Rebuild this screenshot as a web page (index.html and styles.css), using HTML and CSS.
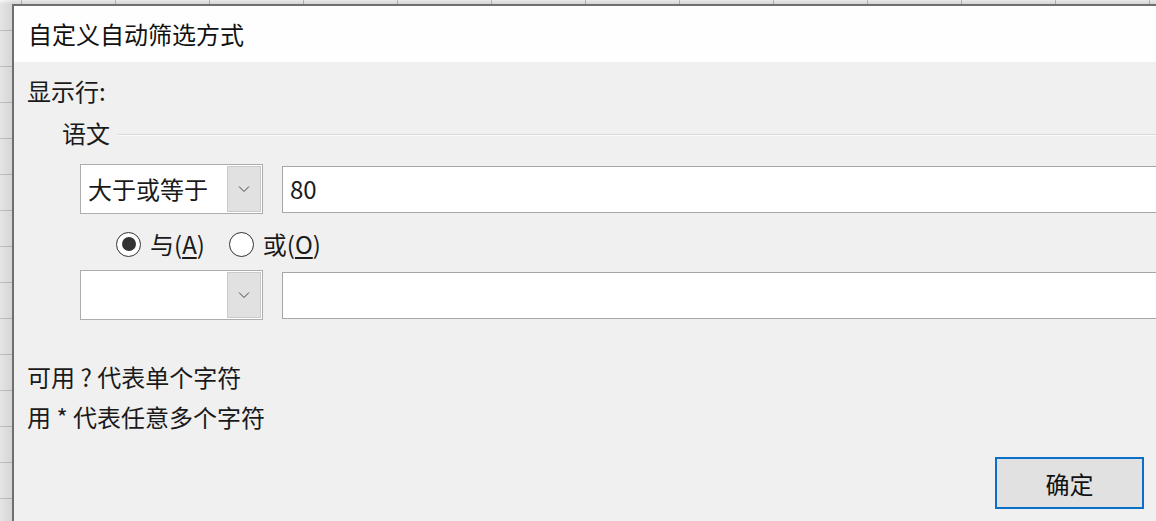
FILE: index.html
```html
<!DOCTYPE html>
<html lang="zh-CN">
<head>
<meta charset="utf-8">
<title>自定义自动筛选方式</title>
<link rel="stylesheet" href="styles.css">
</head>
<body>
<div class="desktop">
  <div class="dialog">
    <div class="titlebar">自定义自动筛选方式</div>
    <div class="content">
      <div class="label">显示行:</div>
      <div class="group-head">
        <span class="group-name">语文</span>
        <span class="group-line"></span>
      </div>
      <div class="criteria">
        <div class="row">
          <div class="combo">
            <span class="combo-text">大于或等于</span>
            <span class="combo-btn">
              <svg width="12" height="8" viewBox="0 0 12 8"><polyline points="1,1.5 6,6.5 11,1.5" fill="none" stroke="#444" stroke-width="1"/></svg>
            </span>
          </div>
          <div class="field">80</div>
        </div>
        <div class="radios">
          <label class="radio"><span class="circle checked"><span class="dot"></span></span><span>与(<u>A</u>)</span></label>
          <label class="radio"><span class="circle"></span><span>或(<u>O</u>)</span></label>
        </div>
        <div class="row row2">
          <div class="combo">
            <span class="combo-text"></span>
            <span class="combo-btn">
              <svg width="12" height="8" viewBox="0 0 12 8"><polyline points="1,1.5 6,6.5 11,1.5" fill="none" stroke="#444" stroke-width="1"/></svg>
            </span>
          </div>
          <div class="field"></div>
        </div>
      </div>
      <div class="hints">
        <div class="hint">可用 ? 代表单个字符</div>
        <div class="hint">用 * 代表任意多个字符</div>
      </div>
      <div class="actions">
        <button class="ok">确定</button>
      </div>
    </div>
  </div>
</div>
</body>
</html>
```

FILE: styles.css
```css
* { box-sizing: border-box; }
html, body {
  margin: 0;
  padding: 0;
  width: 1156px;
  height: 521px;
  overflow: hidden;
}
body {
  font-family: "Noto Sans CJK SC", "Noto Sans", sans-serif;
  color: #1a1a1a;
}
.desktop {
  width: 1156px;
  height: 521px;
  overflow: hidden;
  background-color: #fff;
  background-image:
    linear-gradient(to right, rgba(255,255,255,0) 0, rgba(0,0,0,0.07) 12px),
    linear-gradient(to bottom, rgba(0,0,0,0.02) 0, rgba(0,0,0,0.1) 4px),
    repeating-linear-gradient(to bottom, transparent 0 30px, #d4d4d4 30px 31px, transparent 31px 36px),
    repeating-linear-gradient(to right, transparent 0 21px, #c8c8c8 21px 22px, transparent 22px 94px);
  padding: 4px 0 0 12px;
}
.dialog {
  width: 1158px;
  height: 520px;
  border-top: 2px solid #6f6f6f;
  border-left: 2px solid #6f6f6f;
  background: #f0f0f0;
  display: flex;
  flex-direction: column;
}
.titlebar {
  height: 56px;
  background: #fefefe;
  padding-left: 14px;
  font-size: 24px;
  line-height: 56px;
  color: #111;
}
.content {
  padding: 14px 0 0 13px;
  font-size: 24px;
  line-height: 30px;
  display: flex;
  flex-direction: column;
}
.label { height: 30px; }
.group-head {
  margin-top: 12px;
  padding-left: 35px;
  display: flex;
  align-items: center;
  height: 30px;
}
.group-line {
  flex: 1;
  margin-left: 8px;
  margin-top: 3px;
  border-top: 1px solid #dadada;
  border-bottom: 1px solid #fafafa;
}
.criteria {
  margin-top: 16px;
  padding-left: 53px;
  display: flex;
  flex-direction: column;
}
.row {
  display: flex;
  align-items: center;
  height: 50px;
}
.row2 { margin-top: 11px; }
.combo {
  width: 183px;
  height: 50px;
  border: 1px solid #adadad;
  background: #fff;
  display: flex;
  align-items: stretch;
  padding: 1px 1px 1px 0;
}
.combo-text {
  flex: 1;
  padding-left: 7px;
  line-height: 46px;
}
.combo-btn {
  width: 34px;
  background: #e1e1e1;
  border: 1px solid #cacaca;
  display: flex;
  align-items: center;
  justify-content: center;
}
.field {
  flex: 1;
  margin-left: 19px;
  height: 47px;
  border: 1px solid #a6a6a6;
  background: #fff;
  padding-left: 7px;
  line-height: 44px;
}
.radios {
  margin-top: 15px;
  padding-left: 36px;
  display: flex;
  align-items: center;
  height: 30px;
  gap: 24px;
}
.radio {
  display: flex;
  align-items: center;
  gap: 9px;
}
.radio u { text-underline-offset: 3px; text-decoration-thickness: 1.5px; }
.circle {
  width: 25px;
  height: 25px;
  border-radius: 50%;
  border: 1.5px solid #333;
  background: #fff;
  display: flex;
  align-items: center;
  justify-content: center;
}
.dot {
  width: 14px;
  height: 14px;
  border-radius: 50%;
  background: #333;
}
.hints { margin-top: 38px; }
.hint { height: 40px; line-height: 38px; }
.actions {
  margin-top: 19px;
  display: flex;
  justify-content: flex-end;
  padding-right: 26px;
}
.ok {
  width: 149px;
  height: 52px;
  border: 2px solid #0a6fc8;
  background: #e1e1e1;
  font-family: "Noto Sans CJK SC", "Noto Sans", sans-serif;
  font-size: 24px;
  color: #111;
  padding: 0;
}
```
